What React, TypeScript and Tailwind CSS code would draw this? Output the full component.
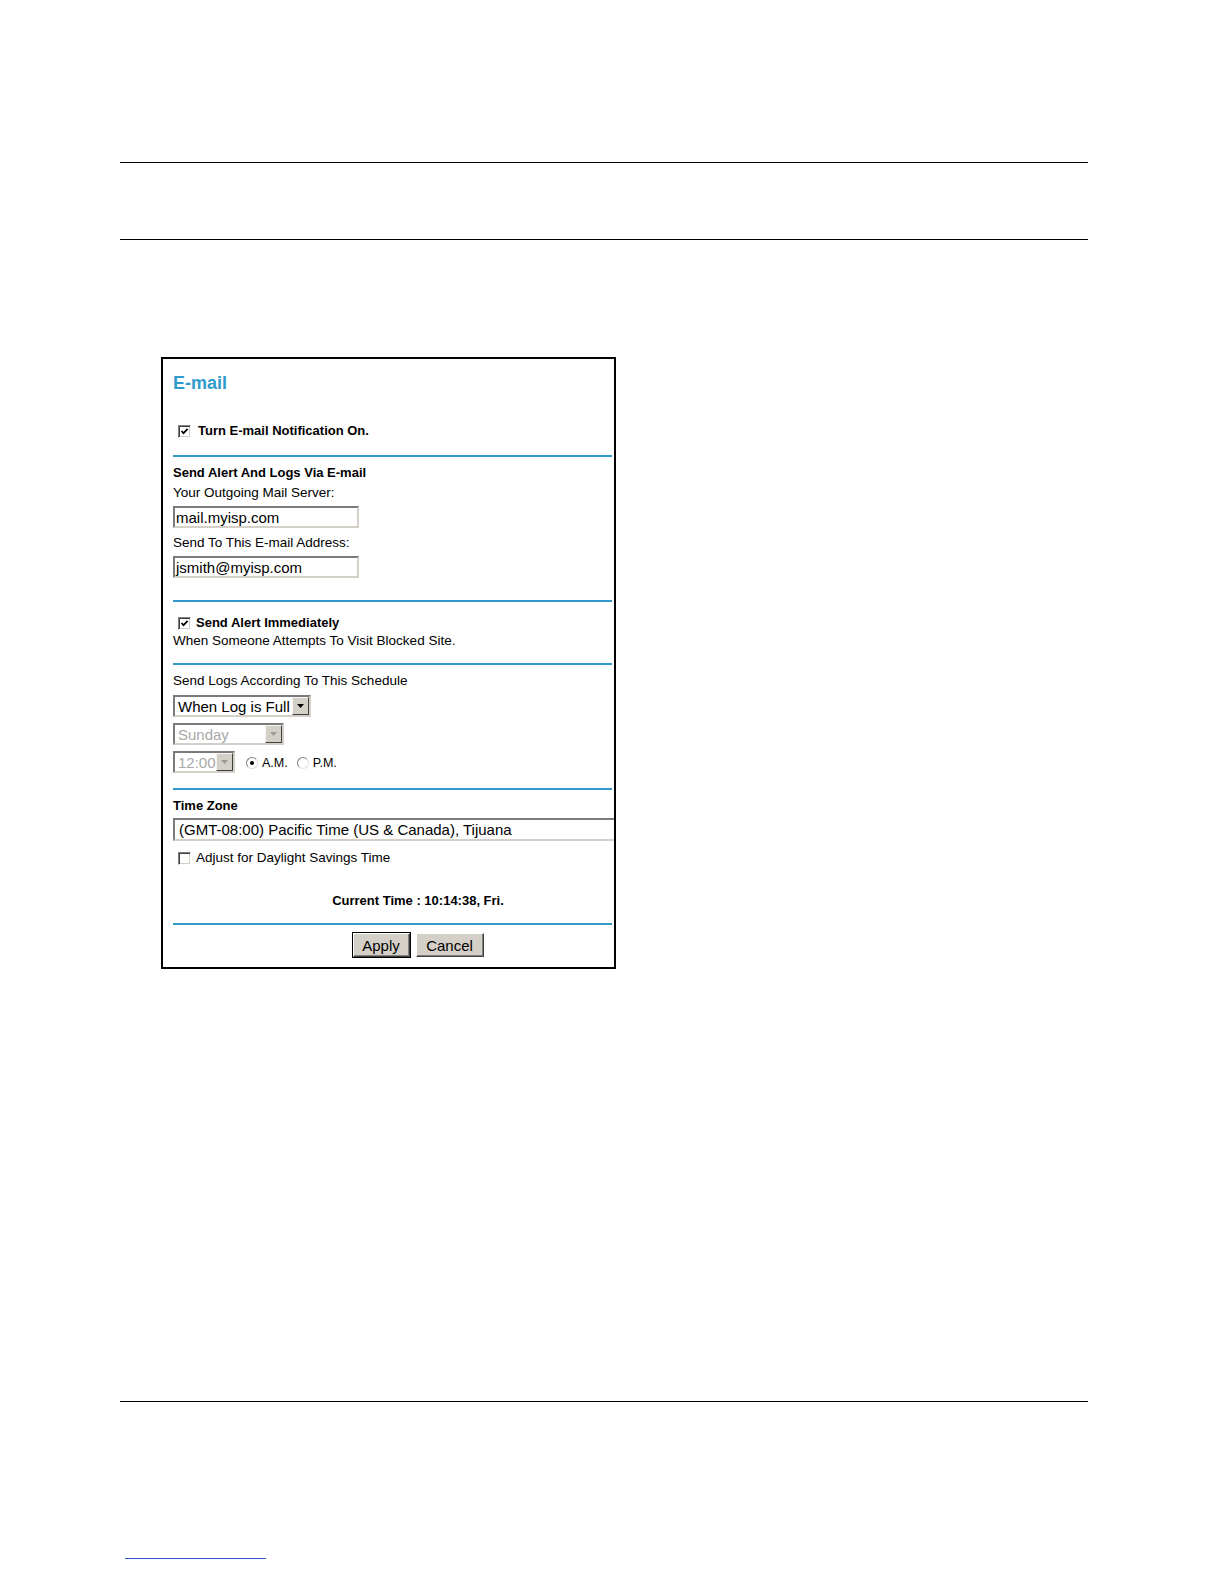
import React from "react";

const BLUE = "bg-[#3399cc]";

function Rule() {
  return <div className={`h-[2px] w-full ${BLUE}`} />;
}

function Checkbox({ checked }: { checked?: boolean }) {
  return (
    <span className="relative inline-flex h-[13px] w-[13px] shrink-0 border border-t-[#808080] border-l-[#808080] border-r-white border-b-white bg-white shadow-[inset_1px_1px_0_#404040,inset_-1px_-1px_0_#d4d0c8]">
      {checked && (
        <svg viewBox="0 0 11 11" className="absolute inset-0 h-full w-full">
          <path d="M2.5 5 L4.5 7.2 L8.6 2.8" fill="none" stroke="#000" strokeWidth="1.7" />
        </svg>
      )}
    </span>
  );
}

function Radio({ checked }: { checked?: boolean }) {
  return (
    <span className="relative inline-flex h-[12px] w-[12px] shrink-0 items-center justify-center rounded-full border border-t-[#808080] border-l-[#808080] border-r-[#e0e0e0] border-b-[#e0e0e0] bg-white">
      {checked && <span className="h-[4px] w-[4px] rounded-full bg-black" />}
    </span>
  );
}

function TextBox({ value }: { value: string }) {
  return (
    <div className="flex h-[22px] w-[186px] items-center border-2 border-t-[#7a7a7a] border-l-[#7a7a7a] border-r-[#d4d0c8] border-b-[#d4d0c8] bg-white pl-px text-[15px] leading-none">
      {value}
    </div>
  );
}

function Arrow({ disabled }: { disabled?: boolean }) {
  return (
    <span className="flex h-[18px] w-[17px] shrink-0 items-center justify-center border border-t-[#f4f4f4] border-l-[#f4f4f4] border-r-[#404040] border-b-[#404040] bg-[#d4d0c8]">
      <svg viewBox="0 0 7 4" className="h-[4px] w-[7px]">
        <path d="M0 0 H7 L3.5 4 Z" fill={disabled ? "#9a9a9a" : "#000"} />
      </svg>
    </span>
  );
}

function Select({
  value,
  width,
  disabled,
}: {
  value: string;
  width: string;
  disabled?: boolean;
}) {
  return (
    <div
      className={`flex h-[22px] ${width} items-center justify-between border-2 border-t-[#7a7a7a] border-l-[#7a7a7a] border-r-[#d4d0c8] border-b-[#d4d0c8] bg-white pl-[3px] text-[15px] leading-none ${
        disabled ? "text-[#a8a8a8]" : "text-black"
      }`}
    >
      <span>{value}</span>
      <Arrow disabled={disabled} />
    </div>
  );
}

function Button({ label, width, primary }: { label: string; width: string; primary?: boolean }) {
  return (
    <div className={`${width} ${primary ? "border border-black" : "border border-transparent"}`}>
      <div className="flex h-[24px] items-center justify-center border border-t-white border-l-white border-r-[#404040] border-b-[#404040] bg-[#d4d0c8] text-[15px] leading-none shadow-[inset_-1px_-1px_0_#808080]">
        {label}
      </div>
    </div>
  );
}

function EmailPanel() {
  return (
    <div className="ml-[161px] mt-[117px] box-border h-[612px] w-[455px] overflow-hidden border-2 border-black pl-[10px] pr-[2px] text-[13.5px] leading-[18px]">
      <div className="flex h-[48px] items-center text-[18px] font-bold text-[#2e9bcb]">E-mail</div>
      <div className="flex h-[48px] items-center gap-[7px] pl-[5px]">
        <Checkbox checked />
        <span className="text-[13px] font-bold">Turn E-mail Notification On.</span>
      </div>
      <Rule />

      <div className="mt-[6px] flex h-[20px] items-center text-[13px] font-bold">
        Send Alert And Logs Via E-mail
      </div>
      <div className="flex h-[20px] items-center">Your Outgoing Mail Server:</div>
      <div className="mt-[3px]">
        <TextBox value="mail.myisp.com" />
      </div>
      <div className="mt-[5px] flex h-[20px] items-center">Send To This E-mail Address:</div>
      <div className="mt-[3px]">
        <TextBox value="jsmith@myisp.com" />
      </div>
      <div className="mt-[22px]">
        <Rule />
      </div>

      <div className="mt-[12px] flex h-[18px] items-center gap-[5px] pl-[5px]">
        <Checkbox checked />
        <span className="text-[13px] font-bold">Send Alert Immediately</span>
      </div>
      <div className="flex h-[18px] items-center">When Someone Attempts To Visit Blocked Site.</div>
      <div className="mt-[13px]">
        <Rule />
      </div>

      <div className="mt-[7px] flex h-[18px] items-center">Send Logs According To This Schedule</div>
      <div className="mt-[5px]">
        <Select value="When Log is Full" width="w-[138px]" />
      </div>
      <div className="mt-[6px]">
        <Select value="Sunday" width="w-[111px]" disabled />
      </div>
      <div className="mt-[6px] flex h-[22px] items-center">
        <Select value="12:00" width="w-[62px]" disabled />
        <div className="ml-[11px] mt-[2px] flex items-center gap-[4px] text-[12.5px]">
          <Radio checked />
          <span>A.M.</span>
          <span className="ml-[1px]" />
          <Radio />
          <span>P.M.</span>
        </div>
      </div>
      <div className="mt-[15px]">
        <Rule />
      </div>

      <div className="mt-[7px] flex h-[18px] items-center text-[13px] font-bold">Time Zone</div>
      <div className="mt-[3px] flex h-[23px] w-[460px] items-center border-2 border-t-[#7a7a7a] border-l-[#7a7a7a] border-r-[#d4d0c8] border-b-[#d4d0c8] bg-white pl-[4px] text-[15px] leading-none">
        (GMT-08:00) Pacific Time (US &amp; Canada), Tijuana
      </div>
      <div className="mt-[8px] flex h-[18px] items-center gap-[5px] pl-[5px]">
        <Checkbox />
        <span>Adjust for Daylight Savings Time</span>
      </div>

      <div className="mt-[25px] flex h-[18px] w-[490px] items-center justify-center text-[13px] font-bold">
        Current Time : 10:14:38, Fri.
      </div>
      <div className="mt-[13px]">
        <Rule />
      </div>

      <div className="mt-[7px] flex w-[490px] justify-center gap-[4px]">
        <Button label="Apply" width="w-[59px]" primary />
        <Button label="Cancel" width="w-[70px]" />
      </div>
    </div>
  );
}

export default function App() {
  return (
    <div className="relative h-[1584px] w-[1224px] overflow-hidden bg-white font-['Liberation_Sans',Arial,sans-serif] text-black">
      <div className="ml-[120px] mt-[162px] h-px w-[968px] bg-black" />
      <div className="ml-[120px] mt-[76px] h-px w-[968px] bg-black" />
      <EmailPanel />
      <div className="ml-[120px] mt-[432px] h-px w-[968px] bg-black" />
      <div className="ml-[125px] mt-[156px] h-px w-[141px] bg-[#3355cc]" />
    </div>
  );
}
